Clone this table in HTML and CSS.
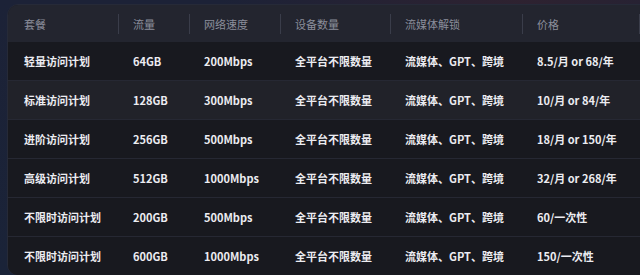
FILE: index.html
```html
<!DOCTYPE html>
<html lang="zh-CN">
<head>
<meta charset="utf-8">
<title>套餐</title>
<link rel="stylesheet" href="styles.css">
</head>
<body>
<div class="page">
  <div class="card">
    <table class="plans">
      <colgroup>
        <col class="c1"><col class="c2"><col class="c3"><col class="c4"><col class="c5"><col class="c6"><col class="c7">
      </colgroup>
      <thead>
        <tr>
          <th>套餐</th><th>流量</th><th>网络速度</th><th>设备数量</th><th>流媒体解锁</th><th>价格</th><th></th>
        </tr>
      </thead>
      <tbody>
        <tr><td>轻量访问计划</td><td>64GB</td><td>200Mbps</td><td>全平台不限数量</td><td>流媒体、GPT、跨境</td><td>8.5/月 or 68/年</td><td></td></tr>
        <tr class="hover"><td>标准访问计划</td><td>128GB</td><td>300Mbps</td><td>全平台不限数量</td><td>流媒体、GPT、跨境</td><td>10/月 or 84/年</td><td></td></tr>
        <tr><td>进阶访问计划</td><td>256GB</td><td>500Mbps</td><td>全平台不限数量</td><td>流媒体、GPT、跨境</td><td>18/月 or 150/年</td><td></td></tr>
        <tr><td>高级访问计划</td><td>512GB</td><td>1000Mbps</td><td>全平台不限数量</td><td>流媒体、GPT、跨境</td><td>32/月 or 268/年</td><td></td></tr>
        <tr><td>不限时访问计划</td><td>200GB</td><td>500Mbps</td><td>全平台不限数量</td><td>流媒体、GPT、跨境</td><td>60/一次性</td><td></td></tr>
        <tr><td>不限时访问计划</td><td>600GB</td><td>1000Mbps</td><td>全平台不限数量</td><td>流媒体、GPT、跨境</td><td>150/一次性</td><td></td></tr>
      </tbody>
    </table>
  </div>
</div>
</body>
</html>
```

FILE: styles.css
```css
html, body {
  margin: 0;
  padding: 0;
  width: 640px;
  height: 275px;
  overflow: hidden;
}
body {
  background: radial-gradient(ellipse 300px 60px at 520px 0px, #2e2230 0%, rgba(46,34,48,0) 100%),
              linear-gradient(180deg, #1c2237 0%, #1a2338 100%);
  font-family: "Noto Sans CJK SC", "Noto Sans", sans-serif;
}
.page {
  padding: 5px 0 0 8px;
}
.card {
  width: 632px;
  height: 270px;
  border-radius: 10px 0 0 10px;
  overflow: hidden;
  background: #1a1b23;
  box-shadow: -1px 0 0 0 #262a38, 0 -1px 0 0 #262a38;
}
.plans {
  width: 632px;
  table-layout: fixed;
  border-collapse: collapse;
}
.c1 { width: 110px; }
.c2 { width: 71px; }
.c3 { width: 91px; }
.c4 { width: 110px; }
.c5 { width: 132px; }
.c6 { width: 117px; }
.c7 { width: 1px; }
.plans th {
  position: relative;
  height: 37px;
  padding: 0 0 0 15px;
  text-align: left;
  font-size: 11px;
  font-weight: 400;
  color: #8b8e9b;
  background: #23252f;
  white-space: nowrap;
}
.plans th:last-child,
.plans td:last-child {
  padding: 0;
}
.plans th:first-child,
.plans td:first-child {
  padding-left: 16px;
}
.plans th + th::before {
  content: "";
  position: absolute;
  left: 0;
  top: 9px;
  bottom: 8px;
  width: 1px;
  background: #3a3d4a;
}
.plans td {
  height: 38px;
  padding: 0 0 0 15px;
  font-size: 11px;
  font-weight: 700;
  color: #ececf1;
  white-space: nowrap;
  border-top: 1px solid #262833;
}
.plans tbody tr:first-child td {
  border-top: none;
}
.plans tbody tr {
  background: #18191f;
}
.plans tbody tr.hover {
  background: #212229;
}
```
